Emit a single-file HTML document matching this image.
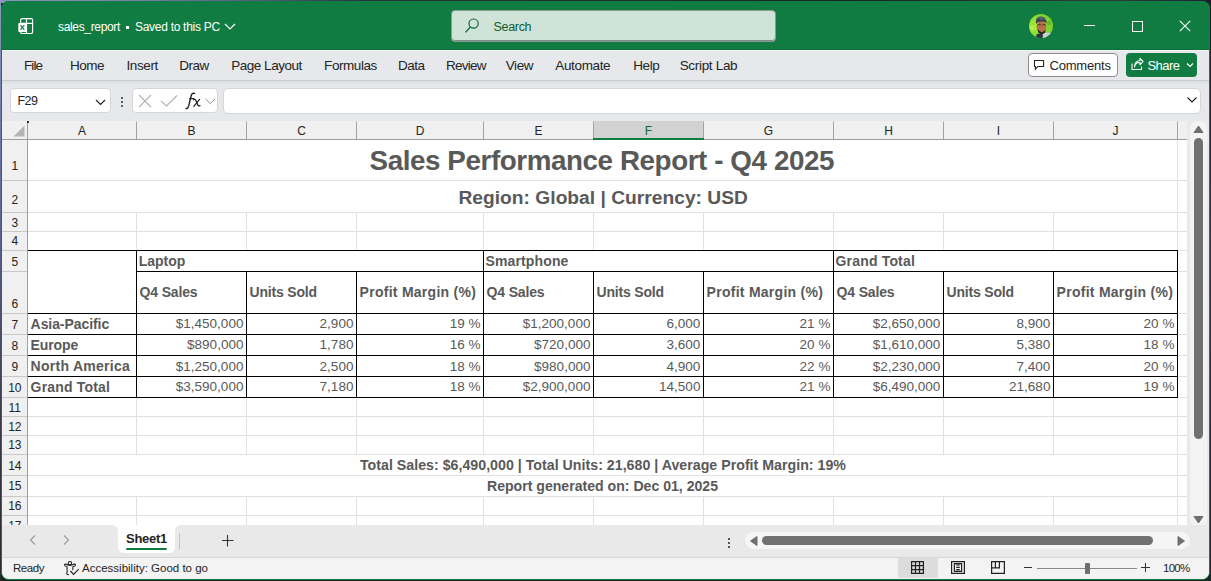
<!DOCTYPE html>
<html><head><meta charset="utf-8">
<style>
*{margin:0;padding:0;box-sizing:border-box}
html,body{width:1211px;height:581px;overflow:hidden}
body{position:relative;background:#15161f;font-family:"Liberation Sans",sans-serif;color:#242424}
.a{position:absolute}
.t{position:absolute;white-space:pre;line-height:1}
</style></head><body>
<div class="a" style="left:0;top:0;width:1211px;height:581px;background:#1c2420"></div>
<div class="a" style="left:0;top:0;width:1211px;height:3px;background:linear-gradient(90deg,#8797ba 0%,#7282aa 11%,#4a5a78 22%,#22363a 30%,#1a3028 50%,#142820 70%,#2a3c3c 92%,#1e1e2c 100%)"></div>
<div class="a" style="left:0;top:0;width:1px;height:581px;background:linear-gradient(#8a9ac0 0%,#6a76a6 25%,#5a6492 40%,#3e3c4c 70%,#2c2a2c 100%)"></div>
<div class="a" style="left:1210px;top:0;width:1px;height:581px;background:linear-gradient(#1c1c2a,#3a3050 40%,#2a2438 100%)"></div>
<div class="a" id="win" style="left:1px;top:1px;width:1209px;height:579px;border-radius:8px;overflow:hidden;background:#107c41">
<div class="a" style="left:-1px;top:-1px;width:1211px;height:581px">
<div class="a" style="left:1px;top:1px;width:1209px;height:49px;background:#107c41"></div>
<div class="a" style="left:1px;top:49px;width:1209px;height:1px;background:#0b7139"></div>
<div class="a" style="left:2px;top:50px;width:1207px;height:529px;background:#e6e8ec;border-radius:0 0 7px 7px"></div>
<div class="a" style="left:2px;top:50px;width:1207px;height:1px;background:#f4f4f7"></div>
<svg class="a" style="left:14px;top:14px" width="24" height="24" viewBox="0 0 24 24">
<rect x="6.6" y="4.6" width="12" height="14.9" rx="1.6" fill="none" stroke="#fff" stroke-width="1.15"/>
<line x1="12.5" y1="4.6" x2="12.5" y2="19.4" stroke="#fff" stroke-width="1.15"/>
<line x1="6.6" y1="9.3" x2="18.6" y2="9.3" stroke="#fff" stroke-width="1.15"/>
<rect x="4.3" y="9" width="8.6" height="9" rx="1.1" fill="#fff"/>
<path d="M6.5 11.2 L10.3 15.9 M10.3 11.2 L6.5 15.9" stroke="#107c41" stroke-width="1.15"/>
</svg>
<div class="t" style="top:20.80px;font-size:12px;color:#fff;letter-spacing:-0.337px;left:58px;">sales_report</div>
<div class="a" style="left:126px;top:26px;width:3px;height:3px;background:#fff"></div>
<div class="t" style="top:20.80px;font-size:12px;color:#fff;letter-spacing:-0.287px;left:135px;">Saved to this PC</div>
<svg class="a" style="left:222px;top:20px" width="16" height="12" viewBox="0 0 16 12"><path d="M3 4 L8 9 L13 4" fill="none" stroke="#fff" stroke-width="1.2"/></svg>
<div class="a" style="left:451px;top:10px;width:325px;height:32px;background:#d0e3d8;border:1px solid #8a9a90;border-radius:4px;box-shadow:inset 0 -1px 0 #7f8c84"></div>
<svg class="a" style="left:460px;top:14px" width="24" height="24" viewBox="0 0 24 24"><circle cx="13.6" cy="9.6" r="4.6" fill="none" stroke="#0e6332" stroke-width="1.2"/><path d="M10.4 12.9 L5.5 18.4" stroke="#0e6332" stroke-width="1.3"/></svg>
<div class="t" style="top:21.38px;font-size:12.5px;color:#0e5c2f;letter-spacing:-0.318px;left:493.5px;">Search</div>
<svg class="a" style="left:1029px;top:14px" width="24" height="24" viewBox="0 0 24 24">
<defs><clipPath id="cc"><circle cx="12" cy="12" r="12"/></clipPath><radialGradient id="gb" cx="0.3" cy="0.5" r="0.8"><stop offset="0" stop-color="#a6ec3c"/><stop offset="1" stop-color="#6cc82a"/></radialGradient></defs>
<g clip-path="url(#cc)">
<rect width="24" height="24" fill="url(#gb)"/>
<circle cx="3" cy="14" r="2.5" fill="#c4f060" opacity="0.7"/>
<circle cx="20" cy="9" r="2.2" fill="#5ab424" opacity="0.7"/>
<path d="M13 24 L14 19.5 Q18 18 21.5 19 L24 24 Z" fill="#c9cfd8"/>
<path d="M6.5 24 L8 20 Q11 19.5 14 20.5 L13.5 24 Z" fill="#2c3442"/>
<ellipse cx="12.5" cy="13" rx="4.8" ry="6.2" fill="#b8704a"/>
<path d="M8.5 10.8 Q10.5 10 12.2 11 M13.4 11 Q15 10.2 16.8 11" stroke="#4a2a1c" stroke-width="0.9" fill="none"/>
<path d="M8.6 15 Q12.5 21 16.6 15.5 L16.2 18.5 Q12.5 21.8 9.2 18.5 Z" fill="#2e2420"/>
<path d="M7 10 Q6 3 11.5 2.6 Q17.6 2.4 17.6 9.8 Q16.6 7.2 12.5 7.6 Q8.6 7.4 7 10Z" fill="#3a4152"/>
<path d="M8.5 4.5 Q11 3.4 13.5 4 M11 5 Q14 4.2 16 5.2" stroke="#8a93a6" stroke-width="0.6" fill="none"/>
</g></svg>
<div class="a" style="left:1084px;top:25px;width:11px;height:1px;background:#fff"></div>
<div class="a" style="left:1132px;top:21px;width:11px;height:11px;border:1px solid #fff"></div>
<svg class="a" style="left:1178px;top:19px" width="14" height="14" viewBox="0 0 14 14"><path d="M1.8 1.8 L12.2 12.2 M12.2 1.8 L1.8 12.2" stroke="#fff" stroke-width="1.1"/></svg>
<div class="a" style="left:2px;top:80px;width:1207px;height:1px;background:#c9ccd0"></div>
<div class="a" style="left:2px;top:81px;width:1207px;height:3px;background:linear-gradient(#d9dce0,#e6e8ec)"></div>
<div class="t" style="top:58.82px;font-size:13.5px;color:#242424;letter-spacing:-0.891px;left:24px;">File</div>
<div class="t" style="top:58.82px;font-size:13.5px;color:#242424;letter-spacing:-0.504px;left:70px;">Home</div>
<div class="t" style="top:58.82px;font-size:13.5px;color:#242424;letter-spacing:-0.378px;left:126.4px;">Insert</div>
<div class="t" style="top:58.82px;font-size:13.5px;color:#242424;letter-spacing:-0.454px;left:179.2px;">Draw</div>
<div class="t" style="top:58.82px;font-size:13.5px;color:#242424;letter-spacing:-0.474px;left:231.2px;">Page Layout</div>
<div class="t" style="top:58.82px;font-size:13.5px;color:#242424;letter-spacing:-0.433px;left:324.1px;">Formulas</div>
<div class="t" style="top:58.82px;font-size:13.5px;color:#242424;letter-spacing:-0.508px;left:398px;">Data</div>
<div class="t" style="top:58.82px;font-size:13.5px;color:#242424;letter-spacing:-0.744px;left:446px;">Review</div>
<div class="t" style="top:58.82px;font-size:13.5px;color:#242424;letter-spacing:-0.458px;left:505.8px;">View</div>
<div class="t" style="top:58.82px;font-size:13.5px;color:#242424;letter-spacing:-0.35px;left:555.3px;">Automate</div>
<div class="t" style="top:58.82px;font-size:13.5px;color:#242424;letter-spacing:-0.441px;left:633.3px;">Help</div>
<div class="t" style="top:58.82px;font-size:13.5px;color:#242424;letter-spacing:-0.32px;left:679.7px;">Script Lab</div>
<div class="a" style="left:1028px;top:53px;width:90px;height:24px;background:#fff;border:1px solid #8d8d8d;border-radius:4px"></div>
<svg class="a" style="left:1031px;top:56px" width="16" height="16" viewBox="0 0 16 16"><path d="M3.5 4.5 H12.6 V10.5 H6.8 L4.4 13.3 V10.5 H3.5 Z" fill="none" stroke="#242424" stroke-width="1.1" stroke-linejoin="miter"/></svg>
<div class="t" style="top:58.95px;font-size:13px;color:#242424;letter-spacing:-0.207px;left:1049.5px;">Comments</div>
<div class="a" style="left:1126px;top:53px;width:71px;height:24px;background:#107c41;border-radius:4px"></div>
<svg class="a" style="left:1129px;top:56px" width="16" height="16" viewBox="0 0 16 16"><path d="M3 7.5 V13.5 H12.5 V10.5" fill="none" stroke="#fff" stroke-width="1.1"/><path d="M5.5 11 Q6 6.5 11 6.5 V8.8 L14 5.5 L11 2.3 V4.5 Q5.5 5 5.5 11Z" fill="none" stroke="#fff" stroke-width="1.1" stroke-linejoin="round"/></svg>
<div class="t" style="top:58.95px;font-size:13px;color:#fff;letter-spacing:-0.541px;left:1147.4px;">Share</div>
<svg class="a" style="left:1184px;top:60px" width="12" height="10" viewBox="0 0 12 10"><path d="M3 3.5 L6 6.5 L9 3.5" fill="none" stroke="#fff" stroke-width="1.2"/></svg>
<div class="a" style="left:10px;top:88px;width:101px;height:25px;background:#fff;border:1px solid #d4d6d9;border-radius:4px"></div>
<div class="t" style="top:95.17px;font-size:12.5px;color:#242424;letter-spacing:-0.516px;left:17.4px;">F29</div>
<svg class="a" style="left:93px;top:95.5px" width="14" height="12" viewBox="0 0 14 12"><path d="M3 4 L7.5 8.5 L12 4" fill="none" stroke="#242424" stroke-width="1.2"/></svg>
<div class="a" style="left:121px;top:96.5px;width:2.2px;height:2.2px;background:#333;border-radius:1px"></div>
<div class="a" style="left:121px;top:100.5px;width:2.2px;height:2.2px;background:#333;border-radius:1px"></div>
<div class="a" style="left:121px;top:104.5px;width:2.2px;height:2.2px;background:#333;border-radius:1px"></div>
<div class="a" style="left:132px;top:88px;width:86px;height:25px;background:#fff;border:1px solid #d4d6d9;border-radius:4px"></div>
<svg class="a" style="left:136px;top:93px" width="18" height="16" viewBox="0 0 18 16"><path d="M3 2 L15 14 M15 2 L3 14" stroke="#b3b3b3" stroke-width="1.1"/></svg>
<svg class="a" style="left:159px;top:93px" width="20" height="16" viewBox="0 0 20 16"><path d="M2 8 L7.5 13 L18 2.5" fill="none" stroke="#b3b3b3" stroke-width="1.1"/></svg>
<svg class="a" style="left:182px;top:89px" width="22" height="22" viewBox="0 0 22 22"><path d="M4 19.3 Q5.6 20.2 6.6 17 L9.4 6 Q10.3 3.6 12.6 4.4" fill="none" stroke="#242424" stroke-width="1.4" stroke-linecap="round"/><path d="M7.3 9.6 H12.3" stroke="#242424" stroke-width="1.2"/><path d="M11.6 10.6 Q13.2 9.8 14 11.8 L15.6 15.6 Q16.4 17.6 18 16.6" fill="none" stroke="#242424" stroke-width="1.3" stroke-linecap="round"/><path d="M17.6 10.4 L11.8 17.4" stroke="#242424" stroke-width="1.2" stroke-linecap="round"/></svg>
<svg class="a" style="left:204px;top:95px" width="12" height="10" viewBox="0 0 12 10"><path d="M1.5 4 L6.2 8.5 L11 4" fill="none" stroke="#8a8a8a" stroke-width="1"/></svg>
<div class="a" style="left:223px;top:88px;width:978px;height:26px;background:#fff;border:1px solid #d4d6d9;border-radius:5px"></div>
<svg class="a" style="left:1184.5px;top:93.8px" width="14" height="12" viewBox="0 0 14 12"><path d="M2.5 3.5 L7 8 L11.5 3.5" fill="none" stroke="#242424" stroke-width="1.2"/></svg>
<div class="a" style="left:2px;top:121px;width:1185px;height:18px;background:#f0f0f0"></div>
<div class="a" style="left:2px;top:139px;width:25px;height:386px;background:#f0f0f0"></div>
<div class="a" style="left:28px;top:140px;width:1159px;height:385px;background:#fff"></div>
<div class="a" style="left:593px;top:121px;width:111px;height:18px;background:#d2d2d2"></div>
<div class="a" style="left:136px;top:121px;width:1px;height:18px;background:linear-gradient(#c8c8c8,#a2a2a2 12%,#a2a2a2)"></div>
<div class="a" style="left:246px;top:121px;width:1px;height:18px;background:linear-gradient(#c8c8c8,#a2a2a2 12%,#a2a2a2)"></div>
<div class="a" style="left:356px;top:121px;width:1px;height:18px;background:linear-gradient(#c8c8c8,#a2a2a2 12%,#a2a2a2)"></div>
<div class="a" style="left:483px;top:121px;width:1px;height:18px;background:linear-gradient(#c8c8c8,#a2a2a2 12%,#a2a2a2)"></div>
<div class="a" style="left:593px;top:121px;width:1px;height:18px;background:linear-gradient(#c8c8c8,#a2a2a2 12%,#a2a2a2)"></div>
<div class="a" style="left:703px;top:121px;width:1px;height:18px;background:linear-gradient(#c8c8c8,#a2a2a2 12%,#a2a2a2)"></div>
<div class="a" style="left:833px;top:121px;width:1px;height:18px;background:linear-gradient(#c8c8c8,#a2a2a2 12%,#a2a2a2)"></div>
<div class="a" style="left:943px;top:121px;width:1px;height:18px;background:linear-gradient(#c8c8c8,#a2a2a2 12%,#a2a2a2)"></div>
<div class="a" style="left:1053px;top:121px;width:1px;height:18px;background:linear-gradient(#c8c8c8,#a2a2a2 12%,#a2a2a2)"></div>
<div class="a" style="left:1177px;top:121px;width:1px;height:18px;background:linear-gradient(#c8c8c8,#a2a2a2 12%,#a2a2a2)"></div>
<div class="a" style="left:2px;top:139px;width:1185px;height:1px;background:#9e9e9e"></div>
<div class="a" style="left:593px;top:138px;width:111px;height:2px;background:#107c41"></div>
<div class="a" style="left:27px;top:121px;width:1px;height:404px;background:#9e9e9e"></div>
<div class="a" style="left:26.5px;top:120.5px;width:2px;height:2px;background:#000;border-radius:1px"></div>
<svg class="a" style="left:12px;top:124px" width="14" height="14" viewBox="0 0 14 14"><path d="M1.5 12.5 L12.5 12.5 L12.5 1.5 Z" fill="#b4b4b4"/></svg>
<div class="t" style="top:124.80px;font-size:12px;color:#242424;left:-418.00px;width:1000px;text-align:center;">A</div>
<div class="t" style="top:124.80px;font-size:12px;color:#242424;left:-308.50px;width:1000px;text-align:center;">B</div>
<div class="t" style="top:124.80px;font-size:12px;color:#242424;left:-198.50px;width:1000px;text-align:center;">C</div>
<div class="t" style="top:124.80px;font-size:12px;color:#242424;left:-80.00px;width:1000px;text-align:center;">D</div>
<div class="t" style="top:124.80px;font-size:12px;color:#242424;left:38.50px;width:1000px;text-align:center;">E</div>
<div class="t" style="top:124.80px;font-size:12px;color:#0e6a35;left:148.50px;width:1000px;text-align:center;">F</div>
<div class="t" style="top:124.80px;font-size:12px;color:#242424;left:268.50px;width:1000px;text-align:center;">G</div>
<div class="t" style="top:124.80px;font-size:12px;color:#242424;left:388.50px;width:1000px;text-align:center;">H</div>
<div class="t" style="top:124.80px;font-size:12px;color:#242424;left:498.50px;width:1000px;text-align:center;">I</div>
<div class="t" style="top:124.80px;font-size:12px;color:#242424;left:615.50px;width:1000px;text-align:center;">J</div>
<div class="a" style="left:2px;top:180px;width:25px;height:1px;background:#c8c8c8"></div>
<div class="t" style="top:160.10px;font-size:12px;color:#242424;left:-485.20px;width:1000px;text-align:center;">1</div>
<div class="a" style="left:2px;top:212px;width:25px;height:1px;background:#c8c8c8"></div>
<div class="t" style="top:194.10px;font-size:12px;color:#242424;left:-485.20px;width:1000px;text-align:center;">2</div>
<div class="a" style="left:2px;top:231px;width:25px;height:1px;background:#c8c8c8"></div>
<div class="t" style="top:216.50px;font-size:12px;color:#242424;left:-485.20px;width:1000px;text-align:center;">3</div>
<div class="a" style="left:2px;top:250px;width:25px;height:1px;background:#c8c8c8"></div>
<div class="t" style="top:235.10px;font-size:12px;color:#242424;left:-485.20px;width:1000px;text-align:center;">4</div>
<div class="a" style="left:2px;top:271px;width:25px;height:1px;background:#c8c8c8"></div>
<div class="t" style="top:256.30px;font-size:12px;color:#242424;left:-485.20px;width:1000px;text-align:center;">5</div>
<div class="a" style="left:2px;top:313px;width:25px;height:1px;background:#c8c8c8"></div>
<div class="t" style="top:298.40px;font-size:12px;color:#242424;left:-485.20px;width:1000px;text-align:center;">6</div>
<div class="a" style="left:2px;top:334px;width:25px;height:1px;background:#c8c8c8"></div>
<div class="t" style="top:318.60px;font-size:12px;color:#242424;left:-485.20px;width:1000px;text-align:center;">7</div>
<div class="a" style="left:2px;top:355px;width:25px;height:1px;background:#c8c8c8"></div>
<div class="t" style="top:339.80px;font-size:12px;color:#242424;left:-485.20px;width:1000px;text-align:center;">8</div>
<div class="a" style="left:2px;top:376px;width:25px;height:1px;background:#c8c8c8"></div>
<div class="t" style="top:360.60px;font-size:12px;color:#242424;left:-485.20px;width:1000px;text-align:center;">9</div>
<div class="a" style="left:2px;top:397px;width:25px;height:1px;background:#c8c8c8"></div>
<div class="t" style="top:381.80px;font-size:12px;color:#242424;left:-485.20px;width:1000px;text-align:center;">10</div>
<div class="a" style="left:2px;top:416px;width:25px;height:1px;background:#c8c8c8"></div>
<div class="t" style="top:401.50px;font-size:12px;color:#242424;left:-485.20px;width:1000px;text-align:center;">11</div>
<div class="a" style="left:2px;top:435px;width:25px;height:1px;background:#c8c8c8"></div>
<div class="t" style="top:420.80px;font-size:12px;color:#242424;left:-485.20px;width:1000px;text-align:center;">12</div>
<div class="a" style="left:2px;top:454px;width:25px;height:1px;background:#c8c8c8"></div>
<div class="t" style="top:439.40px;font-size:12px;color:#242424;left:-485.20px;width:1000px;text-align:center;">13</div>
<div class="a" style="left:2px;top:475px;width:25px;height:1px;background:#c8c8c8"></div>
<div class="t" style="top:459.60px;font-size:12px;color:#242424;left:-485.20px;width:1000px;text-align:center;">14</div>
<div class="a" style="left:2px;top:496px;width:25px;height:1px;background:#c8c8c8"></div>
<div class="t" style="top:480.10px;font-size:12px;color:#242424;left:-485.20px;width:1000px;text-align:center;">15</div>
<div class="a" style="left:2px;top:515px;width:25px;height:1px;background:#c8c8c8"></div>
<div class="t" style="top:500.30px;font-size:12px;color:#242424;left:-485.20px;width:1000px;text-align:center;">16</div>
<div class="t" style="top:519.80px;font-size:12px;color:#242424;left:-485.20px;width:1000px;text-align:center;">17</div>
<div class="a" style="left:28px;top:180px;width:1159px;height:1px;background:#e1e1e1"></div>
<div class="a" style="left:1177px;top:140px;width:1px;height:40px;background:#e1e1e1"></div>
<div class="a" style="left:28px;top:212px;width:1159px;height:1px;background:#e1e1e1"></div>
<div class="a" style="left:1177px;top:181px;width:1px;height:31px;background:#e1e1e1"></div>
<div class="a" style="left:28px;top:231px;width:1159px;height:1px;background:#e1e1e1"></div>
<div class="a" style="left:136px;top:213px;width:1px;height:18px;background:#e1e1e1"></div>
<div class="a" style="left:246px;top:213px;width:1px;height:18px;background:#e1e1e1"></div>
<div class="a" style="left:356px;top:213px;width:1px;height:18px;background:#e1e1e1"></div>
<div class="a" style="left:483px;top:213px;width:1px;height:18px;background:#e1e1e1"></div>
<div class="a" style="left:593px;top:213px;width:1px;height:18px;background:#e1e1e1"></div>
<div class="a" style="left:703px;top:213px;width:1px;height:18px;background:#e1e1e1"></div>
<div class="a" style="left:833px;top:213px;width:1px;height:18px;background:#e1e1e1"></div>
<div class="a" style="left:943px;top:213px;width:1px;height:18px;background:#e1e1e1"></div>
<div class="a" style="left:1053px;top:213px;width:1px;height:18px;background:#e1e1e1"></div>
<div class="a" style="left:1177px;top:213px;width:1px;height:18px;background:#e1e1e1"></div>
<div class="a" style="left:28px;top:250px;width:1159px;height:1px;background:#e1e1e1"></div>
<div class="a" style="left:136px;top:232px;width:1px;height:18px;background:#e1e1e1"></div>
<div class="a" style="left:246px;top:232px;width:1px;height:18px;background:#e1e1e1"></div>
<div class="a" style="left:356px;top:232px;width:1px;height:18px;background:#e1e1e1"></div>
<div class="a" style="left:483px;top:232px;width:1px;height:18px;background:#e1e1e1"></div>
<div class="a" style="left:593px;top:232px;width:1px;height:18px;background:#e1e1e1"></div>
<div class="a" style="left:703px;top:232px;width:1px;height:18px;background:#e1e1e1"></div>
<div class="a" style="left:833px;top:232px;width:1px;height:18px;background:#e1e1e1"></div>
<div class="a" style="left:943px;top:232px;width:1px;height:18px;background:#e1e1e1"></div>
<div class="a" style="left:1053px;top:232px;width:1px;height:18px;background:#e1e1e1"></div>
<div class="a" style="left:1177px;top:232px;width:1px;height:18px;background:#e1e1e1"></div>
<div class="a" style="left:28px;top:271px;width:1159px;height:1px;background:#e1e1e1"></div>
<div class="a" style="left:136px;top:251px;width:1px;height:20px;background:#e1e1e1"></div>
<div class="a" style="left:246px;top:251px;width:1px;height:20px;background:#e1e1e1"></div>
<div class="a" style="left:356px;top:251px;width:1px;height:20px;background:#e1e1e1"></div>
<div class="a" style="left:483px;top:251px;width:1px;height:20px;background:#e1e1e1"></div>
<div class="a" style="left:593px;top:251px;width:1px;height:20px;background:#e1e1e1"></div>
<div class="a" style="left:703px;top:251px;width:1px;height:20px;background:#e1e1e1"></div>
<div class="a" style="left:833px;top:251px;width:1px;height:20px;background:#e1e1e1"></div>
<div class="a" style="left:943px;top:251px;width:1px;height:20px;background:#e1e1e1"></div>
<div class="a" style="left:1053px;top:251px;width:1px;height:20px;background:#e1e1e1"></div>
<div class="a" style="left:1177px;top:251px;width:1px;height:20px;background:#e1e1e1"></div>
<div class="a" style="left:28px;top:313px;width:1159px;height:1px;background:#e1e1e1"></div>
<div class="a" style="left:136px;top:272px;width:1px;height:41px;background:#e1e1e1"></div>
<div class="a" style="left:246px;top:272px;width:1px;height:41px;background:#e1e1e1"></div>
<div class="a" style="left:356px;top:272px;width:1px;height:41px;background:#e1e1e1"></div>
<div class="a" style="left:483px;top:272px;width:1px;height:41px;background:#e1e1e1"></div>
<div class="a" style="left:593px;top:272px;width:1px;height:41px;background:#e1e1e1"></div>
<div class="a" style="left:703px;top:272px;width:1px;height:41px;background:#e1e1e1"></div>
<div class="a" style="left:833px;top:272px;width:1px;height:41px;background:#e1e1e1"></div>
<div class="a" style="left:943px;top:272px;width:1px;height:41px;background:#e1e1e1"></div>
<div class="a" style="left:1053px;top:272px;width:1px;height:41px;background:#e1e1e1"></div>
<div class="a" style="left:1177px;top:272px;width:1px;height:41px;background:#e1e1e1"></div>
<div class="a" style="left:28px;top:334px;width:1159px;height:1px;background:#e1e1e1"></div>
<div class="a" style="left:136px;top:314px;width:1px;height:20px;background:#e1e1e1"></div>
<div class="a" style="left:246px;top:314px;width:1px;height:20px;background:#e1e1e1"></div>
<div class="a" style="left:356px;top:314px;width:1px;height:20px;background:#e1e1e1"></div>
<div class="a" style="left:483px;top:314px;width:1px;height:20px;background:#e1e1e1"></div>
<div class="a" style="left:593px;top:314px;width:1px;height:20px;background:#e1e1e1"></div>
<div class="a" style="left:703px;top:314px;width:1px;height:20px;background:#e1e1e1"></div>
<div class="a" style="left:833px;top:314px;width:1px;height:20px;background:#e1e1e1"></div>
<div class="a" style="left:943px;top:314px;width:1px;height:20px;background:#e1e1e1"></div>
<div class="a" style="left:1053px;top:314px;width:1px;height:20px;background:#e1e1e1"></div>
<div class="a" style="left:1177px;top:314px;width:1px;height:20px;background:#e1e1e1"></div>
<div class="a" style="left:28px;top:355px;width:1159px;height:1px;background:#e1e1e1"></div>
<div class="a" style="left:136px;top:335px;width:1px;height:20px;background:#e1e1e1"></div>
<div class="a" style="left:246px;top:335px;width:1px;height:20px;background:#e1e1e1"></div>
<div class="a" style="left:356px;top:335px;width:1px;height:20px;background:#e1e1e1"></div>
<div class="a" style="left:483px;top:335px;width:1px;height:20px;background:#e1e1e1"></div>
<div class="a" style="left:593px;top:335px;width:1px;height:20px;background:#e1e1e1"></div>
<div class="a" style="left:703px;top:335px;width:1px;height:20px;background:#e1e1e1"></div>
<div class="a" style="left:833px;top:335px;width:1px;height:20px;background:#e1e1e1"></div>
<div class="a" style="left:943px;top:335px;width:1px;height:20px;background:#e1e1e1"></div>
<div class="a" style="left:1053px;top:335px;width:1px;height:20px;background:#e1e1e1"></div>
<div class="a" style="left:1177px;top:335px;width:1px;height:20px;background:#e1e1e1"></div>
<div class="a" style="left:28px;top:376px;width:1159px;height:1px;background:#e1e1e1"></div>
<div class="a" style="left:136px;top:356px;width:1px;height:20px;background:#e1e1e1"></div>
<div class="a" style="left:246px;top:356px;width:1px;height:20px;background:#e1e1e1"></div>
<div class="a" style="left:356px;top:356px;width:1px;height:20px;background:#e1e1e1"></div>
<div class="a" style="left:483px;top:356px;width:1px;height:20px;background:#e1e1e1"></div>
<div class="a" style="left:593px;top:356px;width:1px;height:20px;background:#e1e1e1"></div>
<div class="a" style="left:703px;top:356px;width:1px;height:20px;background:#e1e1e1"></div>
<div class="a" style="left:833px;top:356px;width:1px;height:20px;background:#e1e1e1"></div>
<div class="a" style="left:943px;top:356px;width:1px;height:20px;background:#e1e1e1"></div>
<div class="a" style="left:1053px;top:356px;width:1px;height:20px;background:#e1e1e1"></div>
<div class="a" style="left:1177px;top:356px;width:1px;height:20px;background:#e1e1e1"></div>
<div class="a" style="left:28px;top:397px;width:1159px;height:1px;background:#e1e1e1"></div>
<div class="a" style="left:136px;top:377px;width:1px;height:20px;background:#e1e1e1"></div>
<div class="a" style="left:246px;top:377px;width:1px;height:20px;background:#e1e1e1"></div>
<div class="a" style="left:356px;top:377px;width:1px;height:20px;background:#e1e1e1"></div>
<div class="a" style="left:483px;top:377px;width:1px;height:20px;background:#e1e1e1"></div>
<div class="a" style="left:593px;top:377px;width:1px;height:20px;background:#e1e1e1"></div>
<div class="a" style="left:703px;top:377px;width:1px;height:20px;background:#e1e1e1"></div>
<div class="a" style="left:833px;top:377px;width:1px;height:20px;background:#e1e1e1"></div>
<div class="a" style="left:943px;top:377px;width:1px;height:20px;background:#e1e1e1"></div>
<div class="a" style="left:1053px;top:377px;width:1px;height:20px;background:#e1e1e1"></div>
<div class="a" style="left:1177px;top:377px;width:1px;height:20px;background:#e1e1e1"></div>
<div class="a" style="left:28px;top:416px;width:1159px;height:1px;background:#e1e1e1"></div>
<div class="a" style="left:136px;top:398px;width:1px;height:18px;background:#e1e1e1"></div>
<div class="a" style="left:246px;top:398px;width:1px;height:18px;background:#e1e1e1"></div>
<div class="a" style="left:356px;top:398px;width:1px;height:18px;background:#e1e1e1"></div>
<div class="a" style="left:483px;top:398px;width:1px;height:18px;background:#e1e1e1"></div>
<div class="a" style="left:593px;top:398px;width:1px;height:18px;background:#e1e1e1"></div>
<div class="a" style="left:703px;top:398px;width:1px;height:18px;background:#e1e1e1"></div>
<div class="a" style="left:833px;top:398px;width:1px;height:18px;background:#e1e1e1"></div>
<div class="a" style="left:943px;top:398px;width:1px;height:18px;background:#e1e1e1"></div>
<div class="a" style="left:1053px;top:398px;width:1px;height:18px;background:#e1e1e1"></div>
<div class="a" style="left:1177px;top:398px;width:1px;height:18px;background:#e1e1e1"></div>
<div class="a" style="left:28px;top:435px;width:1159px;height:1px;background:#e1e1e1"></div>
<div class="a" style="left:136px;top:417px;width:1px;height:18px;background:#e1e1e1"></div>
<div class="a" style="left:246px;top:417px;width:1px;height:18px;background:#e1e1e1"></div>
<div class="a" style="left:356px;top:417px;width:1px;height:18px;background:#e1e1e1"></div>
<div class="a" style="left:483px;top:417px;width:1px;height:18px;background:#e1e1e1"></div>
<div class="a" style="left:593px;top:417px;width:1px;height:18px;background:#e1e1e1"></div>
<div class="a" style="left:703px;top:417px;width:1px;height:18px;background:#e1e1e1"></div>
<div class="a" style="left:833px;top:417px;width:1px;height:18px;background:#e1e1e1"></div>
<div class="a" style="left:943px;top:417px;width:1px;height:18px;background:#e1e1e1"></div>
<div class="a" style="left:1053px;top:417px;width:1px;height:18px;background:#e1e1e1"></div>
<div class="a" style="left:1177px;top:417px;width:1px;height:18px;background:#e1e1e1"></div>
<div class="a" style="left:28px;top:454px;width:1159px;height:1px;background:#e1e1e1"></div>
<div class="a" style="left:136px;top:436px;width:1px;height:18px;background:#e1e1e1"></div>
<div class="a" style="left:246px;top:436px;width:1px;height:18px;background:#e1e1e1"></div>
<div class="a" style="left:356px;top:436px;width:1px;height:18px;background:#e1e1e1"></div>
<div class="a" style="left:483px;top:436px;width:1px;height:18px;background:#e1e1e1"></div>
<div class="a" style="left:593px;top:436px;width:1px;height:18px;background:#e1e1e1"></div>
<div class="a" style="left:703px;top:436px;width:1px;height:18px;background:#e1e1e1"></div>
<div class="a" style="left:833px;top:436px;width:1px;height:18px;background:#e1e1e1"></div>
<div class="a" style="left:943px;top:436px;width:1px;height:18px;background:#e1e1e1"></div>
<div class="a" style="left:1053px;top:436px;width:1px;height:18px;background:#e1e1e1"></div>
<div class="a" style="left:1177px;top:436px;width:1px;height:18px;background:#e1e1e1"></div>
<div class="a" style="left:28px;top:475px;width:1159px;height:1px;background:#e1e1e1"></div>
<div class="a" style="left:1177px;top:455px;width:1px;height:20px;background:#e1e1e1"></div>
<div class="a" style="left:28px;top:496px;width:1159px;height:1px;background:#e1e1e1"></div>
<div class="a" style="left:1177px;top:476px;width:1px;height:20px;background:#e1e1e1"></div>
<div class="a" style="left:28px;top:515px;width:1159px;height:1px;background:#e1e1e1"></div>
<div class="a" style="left:136px;top:497px;width:1px;height:18px;background:#e1e1e1"></div>
<div class="a" style="left:246px;top:497px;width:1px;height:18px;background:#e1e1e1"></div>
<div class="a" style="left:356px;top:497px;width:1px;height:18px;background:#e1e1e1"></div>
<div class="a" style="left:483px;top:497px;width:1px;height:18px;background:#e1e1e1"></div>
<div class="a" style="left:593px;top:497px;width:1px;height:18px;background:#e1e1e1"></div>
<div class="a" style="left:703px;top:497px;width:1px;height:18px;background:#e1e1e1"></div>
<div class="a" style="left:833px;top:497px;width:1px;height:18px;background:#e1e1e1"></div>
<div class="a" style="left:943px;top:497px;width:1px;height:18px;background:#e1e1e1"></div>
<div class="a" style="left:1053px;top:497px;width:1px;height:18px;background:#e1e1e1"></div>
<div class="a" style="left:1177px;top:497px;width:1px;height:18px;background:#e1e1e1"></div>
<div class="a" style="left:136px;top:516px;width:1px;height:9px;background:#e1e1e1"></div>
<div class="a" style="left:246px;top:516px;width:1px;height:9px;background:#e1e1e1"></div>
<div class="a" style="left:356px;top:516px;width:1px;height:9px;background:#e1e1e1"></div>
<div class="a" style="left:483px;top:516px;width:1px;height:9px;background:#e1e1e1"></div>
<div class="a" style="left:593px;top:516px;width:1px;height:9px;background:#e1e1e1"></div>
<div class="a" style="left:703px;top:516px;width:1px;height:9px;background:#e1e1e1"></div>
<div class="a" style="left:833px;top:516px;width:1px;height:9px;background:#e1e1e1"></div>
<div class="a" style="left:943px;top:516px;width:1px;height:9px;background:#e1e1e1"></div>
<div class="a" style="left:1053px;top:516px;width:1px;height:9px;background:#e1e1e1"></div>
<div class="a" style="left:1177px;top:516px;width:1px;height:9px;background:#e1e1e1"></div>
<div class="a" style="left:28px;top:250px;width:1150px;height:148px;background:#fff"></div>
<div class="a" style="left:28px;top:250px;width:1150px;height:1px;background:#000"></div>
<div class="a" style="left:136px;top:271px;width:1042px;height:1px;background:#000"></div>
<div class="a" style="left:28px;top:313px;width:1150px;height:1px;background:#000"></div>
<div class="a" style="left:28px;top:334px;width:1150px;height:1px;background:#000"></div>
<div class="a" style="left:28px;top:355px;width:1150px;height:1px;background:#000"></div>
<div class="a" style="left:28px;top:376px;width:1150px;height:1px;background:#000"></div>
<div class="a" style="left:28px;top:397px;width:1150px;height:1px;background:#000"></div>
<div class="a" style="left:136px;top:250px;width:1px;height:148px;background:#000"></div>
<div class="a" style="left:483px;top:250px;width:1px;height:148px;background:#000"></div>
<div class="a" style="left:833px;top:250px;width:1px;height:148px;background:#000"></div>
<div class="a" style="left:1177px;top:250px;width:1px;height:148px;background:#000"></div>
<div class="a" style="left:246px;top:271px;width:1px;height:127px;background:#000"></div>
<div class="a" style="left:356px;top:271px;width:1px;height:127px;background:#000"></div>
<div class="a" style="left:593px;top:271px;width:1px;height:127px;background:#000"></div>
<div class="a" style="left:703px;top:271px;width:1px;height:127px;background:#000"></div>
<div class="a" style="left:943px;top:271px;width:1px;height:127px;background:#000"></div>
<div class="a" style="left:1053px;top:271px;width:1px;height:127px;background:#000"></div>
<div class="t" style="top:147.17px;font-size:27.8px;color:#595959;font-weight:bold;letter-spacing:-0.425px;left:101.79px;width:1000px;text-align:center;">Sales Performance Report - Q4 2025</div>
<div class="t" style="top:188.18px;font-size:19.2px;color:#595959;font-weight:bold;letter-spacing:0.018px;left:103.21px;width:1000px;text-align:center;">Region: Global | Currency: USD</div>
<div class="t" style="top:253.90px;font-size:14px;color:#595959;font-weight:bold;letter-spacing:-0.026px;left:138.8px;">Laptop</div>
<div class="t" style="top:253.90px;font-size:14px;color:#595959;font-weight:bold;letter-spacing:0.131px;left:485.5px;">Smartphone</div>
<div class="t" style="top:253.90px;font-size:14px;color:#595959;font-weight:bold;letter-spacing:0.179px;left:835.5px;">Grand Total</div>
<div class="t" style="top:284.60px;font-size:14px;color:#595959;font-weight:bold;letter-spacing:-0.157px;left:139.6px;">Q4 Sales</div>
<div class="t" style="top:284.60px;font-size:14px;color:#595959;font-weight:bold;letter-spacing:-0.193px;left:249.6px;">Units Sold</div>
<div class="t" style="top:284.60px;font-size:14px;color:#595959;font-weight:bold;letter-spacing:0.265px;left:359.6px;">Profit Margin (%)</div>
<div class="t" style="top:284.60px;font-size:14px;color:#595959;font-weight:bold;letter-spacing:-0.157px;left:486.6px;">Q4 Sales</div>
<div class="t" style="top:284.60px;font-size:14px;color:#595959;font-weight:bold;letter-spacing:-0.193px;left:596.6px;">Units Sold</div>
<div class="t" style="top:284.60px;font-size:14px;color:#595959;font-weight:bold;letter-spacing:0.265px;left:706.6px;">Profit Margin (%)</div>
<div class="t" style="top:284.60px;font-size:14px;color:#595959;font-weight:bold;letter-spacing:-0.157px;left:836.6px;">Q4 Sales</div>
<div class="t" style="top:284.60px;font-size:14px;color:#595959;font-weight:bold;letter-spacing:-0.193px;left:946.6px;">Units Sold</div>
<div class="t" style="top:284.60px;font-size:14px;color:#595959;font-weight:bold;letter-spacing:0.265px;left:1056.6px;">Profit Margin (%)</div>
<div class="t" style="top:316.50px;font-size:14px;color:#595959;font-weight:bold;letter-spacing:-0.073px;left:30.6px;">Asia-Pacific</div>
<div class="t" style="top:317.32px;font-size:13.5px;color:#595959;left:-356.60px;width:600px;text-align:right;">$1,450,000</div>
<div class="t" style="top:317.32px;font-size:13.5px;color:#595959;left:-246.60px;width:600px;text-align:right;">2,900</div>
<div class="t" style="top:317.32px;font-size:13.5px;color:#595959;left:-119.60px;width:600px;text-align:right;">19 %</div>
<div class="t" style="top:317.32px;font-size:13.5px;color:#595959;left:-9.60px;width:600px;text-align:right;">$1,200,000</div>
<div class="t" style="top:317.32px;font-size:13.5px;color:#595959;left:100.40px;width:600px;text-align:right;">6,000</div>
<div class="t" style="top:317.32px;font-size:13.5px;color:#595959;left:230.40px;width:600px;text-align:right;">21 %</div>
<div class="t" style="top:317.32px;font-size:13.5px;color:#595959;left:340.40px;width:600px;text-align:right;">$2,650,000</div>
<div class="t" style="top:317.32px;font-size:13.5px;color:#595959;left:450.40px;width:600px;text-align:right;">8,900</div>
<div class="t" style="top:317.32px;font-size:13.5px;color:#595959;left:574.40px;width:600px;text-align:right;">20 %</div>
<div class="t" style="top:337.60px;font-size:14px;color:#595959;font-weight:bold;letter-spacing:-0.122px;left:30.6px;">Europe</div>
<div class="t" style="top:338.42px;font-size:13.5px;color:#595959;left:-356.60px;width:600px;text-align:right;">$890,000</div>
<div class="t" style="top:338.42px;font-size:13.5px;color:#595959;left:-246.60px;width:600px;text-align:right;">1,780</div>
<div class="t" style="top:338.42px;font-size:13.5px;color:#595959;left:-119.60px;width:600px;text-align:right;">16 %</div>
<div class="t" style="top:338.42px;font-size:13.5px;color:#595959;left:-9.60px;width:600px;text-align:right;">$720,000</div>
<div class="t" style="top:338.42px;font-size:13.5px;color:#595959;left:100.40px;width:600px;text-align:right;">3,600</div>
<div class="t" style="top:338.42px;font-size:13.5px;color:#595959;left:230.40px;width:600px;text-align:right;">20 %</div>
<div class="t" style="top:338.42px;font-size:13.5px;color:#595959;left:340.40px;width:600px;text-align:right;">$1,610,000</div>
<div class="t" style="top:338.42px;font-size:13.5px;color:#595959;left:450.40px;width:600px;text-align:right;">5,380</div>
<div class="t" style="top:338.42px;font-size:13.5px;color:#595959;left:574.40px;width:600px;text-align:right;">18 %</div>
<div class="t" style="top:358.90px;font-size:14px;color:#595959;font-weight:bold;letter-spacing:0.273px;left:30.6px;">North America</div>
<div class="t" style="top:359.72px;font-size:13.5px;color:#595959;left:-356.60px;width:600px;text-align:right;">$1,250,000</div>
<div class="t" style="top:359.72px;font-size:13.5px;color:#595959;left:-246.60px;width:600px;text-align:right;">2,500</div>
<div class="t" style="top:359.72px;font-size:13.5px;color:#595959;left:-119.60px;width:600px;text-align:right;">18 %</div>
<div class="t" style="top:359.72px;font-size:13.5px;color:#595959;left:-9.60px;width:600px;text-align:right;">$980,000</div>
<div class="t" style="top:359.72px;font-size:13.5px;color:#595959;left:100.40px;width:600px;text-align:right;">4,900</div>
<div class="t" style="top:359.72px;font-size:13.5px;color:#595959;left:230.40px;width:600px;text-align:right;">22 %</div>
<div class="t" style="top:359.72px;font-size:13.5px;color:#595959;left:340.40px;width:600px;text-align:right;">$2,230,000</div>
<div class="t" style="top:359.72px;font-size:13.5px;color:#595959;left:450.40px;width:600px;text-align:right;">7,400</div>
<div class="t" style="top:359.72px;font-size:13.5px;color:#595959;left:574.40px;width:600px;text-align:right;">20 %</div>
<div class="t" style="top:379.60px;font-size:14px;color:#595959;font-weight:bold;letter-spacing:0.179px;left:30.6px;">Grand Total</div>
<div class="t" style="top:380.42px;font-size:13.5px;color:#595959;left:-356.60px;width:600px;text-align:right;">$3,590,000</div>
<div class="t" style="top:380.42px;font-size:13.5px;color:#595959;left:-246.60px;width:600px;text-align:right;">7,180</div>
<div class="t" style="top:380.42px;font-size:13.5px;color:#595959;left:-119.60px;width:600px;text-align:right;">18 %</div>
<div class="t" style="top:380.42px;font-size:13.5px;color:#595959;left:-9.60px;width:600px;text-align:right;">$2,900,000</div>
<div class="t" style="top:380.42px;font-size:13.5px;color:#595959;left:100.40px;width:600px;text-align:right;">14,500</div>
<div class="t" style="top:380.42px;font-size:13.5px;color:#595959;left:230.40px;width:600px;text-align:right;">21 %</div>
<div class="t" style="top:380.42px;font-size:13.5px;color:#595959;left:340.40px;width:600px;text-align:right;">$6,490,000</div>
<div class="t" style="top:380.42px;font-size:13.5px;color:#595959;left:450.40px;width:600px;text-align:right;">21,680</div>
<div class="t" style="top:380.42px;font-size:13.5px;color:#595959;left:574.40px;width:600px;text-align:right;">19 %</div>
<div class="t" style="top:458.13px;font-size:14.2px;color:#595959;font-weight:bold;letter-spacing:0.014px;left:103.01px;width:1000px;text-align:center;">Total Sales: $6,490,000 | Total Units: 21,680 | Average Profit Margin: 19%</div>
<div class="t" style="top:479.21px;font-size:14.1px;color:#595959;font-weight:bold;letter-spacing:-0.002px;left:102.50px;width:1000px;text-align:center;">Report generated on: Dec 01, 2025</div>
<div class="a" style="left:1187px;top:121px;width:22px;height:404px;background:#e8eaed"></div>
<div class="a" style="left:1190px;top:121px;width:17px;height:406px;background:#f3f3f3;border-radius:8px"></div>
<svg class="a" style="left:1192px;top:124px" width="13" height="11" viewBox="0 0 13 11"><path d="M6.5 2 L11 8.5 L2 8.5 Z" fill="#6f6f6f" stroke="#6f6f6f" stroke-width="1" stroke-linejoin="round"/></svg>
<div class="a" style="left:1194px;top:138px;width:9px;height:301px;background:#717171;border-radius:4.5px"></div>
<svg class="a" style="left:1192px;top:514px" width="13" height="11" viewBox="0 0 13 11"><path d="M2 2.5 L11 2.5 L6.5 9 Z" fill="#6f6f6f" stroke="#6f6f6f" stroke-width="1" stroke-linejoin="round"/></svg>
<div class="a" style="left:2px;top:525px;width:1207px;height:32px;background:#eae9e9"></div>
<div class="a" style="left:110px;top:525px;width:75px;height:8px;background:#fff"></div>
<div class="a" style="left:2px;top:525px;width:116px;height:32px;background:#eae9e9;border-top-right-radius:6px"></div>
<div class="a" style="left:175px;top:525px;width:1034px;height:32px;background:#eae9e9;border-top-left-radius:6px"></div>
<div class="a" style="left:118px;top:525px;width:57px;height:28px;background:#fff;border-radius:0 0 6px 6px"></div>
<div class="t" style="top:531.65px;font-size:13px;color:#242424;font-weight:bold;letter-spacing:-0.273px;left:126px;">Sheet1</div>
<div class="a" style="left:126px;top:548px;width:41px;height:2px;background:#107c41;border-radius:1px"></div>
<div class="a" style="left:179px;top:533px;width:1px;height:16px;background:#c4c4c4"></div>
<svg class="a" style="left:26px;top:533px" width="14" height="14" viewBox="0 0 14 14"><path d="M9 2.5 L4.5 7 L9 11.5" fill="none" stroke="#9a9a9a" stroke-width="1.1"/></svg>
<svg class="a" style="left:59px;top:533px" width="14" height="14" viewBox="0 0 14 14"><path d="M5 2.5 L9.5 7 L5 11.5" fill="none" stroke="#9a9a9a" stroke-width="1.1"/></svg>
<svg class="a" style="left:220px;top:533px" width="15" height="15" viewBox="0 0 15 15"><path d="M7.5 2 V13.5 M2 7.5 H13.5" fill="none" stroke="#333" stroke-width="1.1"/></svg>
<div class="a" style="left:728px;top:537.5px;width:2.2px;height:2.2px;background:#222;border-radius:1px"></div>
<div class="a" style="left:728px;top:541.5px;width:2.2px;height:2.2px;background:#222;border-radius:1px"></div>
<div class="a" style="left:728px;top:545.5px;width:2.2px;height:2.2px;background:#222;border-radius:1px"></div>
<div class="a" style="left:745px;top:532px;width:445px;height:17px;background:#f5f5f5;border-radius:8.5px"></div>
<svg class="a" style="left:748px;top:535px" width="12" height="12" viewBox="0 0 12 12"><path d="M9 1.5 L9 10.5 L2.5 6 Z" fill="#6f6f6f" stroke="#6f6f6f" stroke-width="1" stroke-linejoin="round"/></svg>
<div class="a" style="left:762px;top:536px;width:391px;height:9px;background:#717171;border-radius:4.5px"></div>
<svg class="a" style="left:1175px;top:535px" width="12" height="12" viewBox="0 0 12 12"><path d="M3 1.5 L3 10.5 L9.5 6 Z" fill="#6f6f6f" stroke="#6f6f6f" stroke-width="1" stroke-linejoin="round"/></svg>
<div class="a" style="left:2px;top:557px;width:1207px;height:1px;background:#d6d6d6"></div>
<div class="a" style="left:2px;top:558px;width:1207px;height:21px;background:#f3f3f3;border-radius:0 0 7px 7px"></div>
<div class="t" style="top:563.02px;font-size:11.5px;color:#242424;letter-spacing:-0.45px;left:13px;">Ready</div>
<svg class="a" style="left:58px;top:558px" width="24" height="20" viewBox="0 0 24 20"><circle cx="11.9" cy="5.2" r="1.7" fill="none" stroke="#222" stroke-width="1.1"/><path d="M9.9 7 Q6.8 5.3 6.5 6.9 Q6.4 8.2 9 8.8 L9.2 13.2 Q8.4 16.2 9.4 16.5 L10.4 16.6 M14 7 Q17.1 5.3 17.5 6.9 Q17.6 8.2 14.9 8.8 L14.8 11.6 M9.9 7 Q11.9 7.8 14 7" fill="none" stroke="#222" stroke-width="1.1" stroke-linecap="round" stroke-linejoin="round"/><path d="M12.4 13 L15.6 16.4 L20.6 11.1" fill="none" stroke="#222" stroke-width="1.1"/></svg>
<div class="t" style="top:563.02px;font-size:11.5px;color:#242424;letter-spacing:0.003px;left:82px;">Accessibility: Good to go</div>
<div class="a" style="left:898px;top:558px;width:40px;height:20px;background:#dcdcdc"></div>
<svg class="a" style="left:910px;top:560px" width="16" height="16" viewBox="0 0 16 16"><path d="M1.6 1.6 H13.4 V13.4 H1.6 Z M1.6 5.5 H13.4 M1.6 9.5 H13.4 M5.5 1.6 V13.4 M9.5 1.6 V13.4" fill="none" stroke="#222" stroke-width="1.25"/></svg>
<svg class="a" style="left:950px;top:560px" width="16" height="16" viewBox="0 0 16 16"><path d="M1.6 1.6 H14.4 V13.4 H1.6 Z M4.4 3.6 H11.6 V11.4 H4.4 Z M6.2 5 H9.8 M6.2 7.3 H9.8 M6.2 9.6 H9.8" fill="none" stroke="#222" stroke-width="1.2"/></svg>
<svg class="a" style="left:990px;top:560px" width="16" height="16" viewBox="0 0 16 16"><path d="M1.6 1.6 H14.4 V13.4 H1.6 Z M1.6 7.8 H9.4 V1.6 M5.4 1.6 V7.8" fill="none" stroke="#222" stroke-width="1.2"/></svg>
<div class="a" style="left:1024px;top:567px;width:8px;height:1px;background:#333"></div>
<div class="a" style="left:1037px;top:567.5px;width:100px;height:1px;background:#8a8a8a"></div>
<div class="a" style="left:1085px;top:563px;width:5px;height:11px;background:#6f6f6f;border-radius:1px"></div>
<svg class="a" style="left:1140px;top:562px" width="11" height="11" viewBox="0 0 11 11"><path d="M5.5 1 V10 M1 5.5 H10" stroke="#333" stroke-width="1"/></svg>
<div class="t" style="top:563.02px;font-size:11.5px;color:#242424;letter-spacing:-0.73px;left:1163px;">100%</div>
</div></div>
</body></html>
